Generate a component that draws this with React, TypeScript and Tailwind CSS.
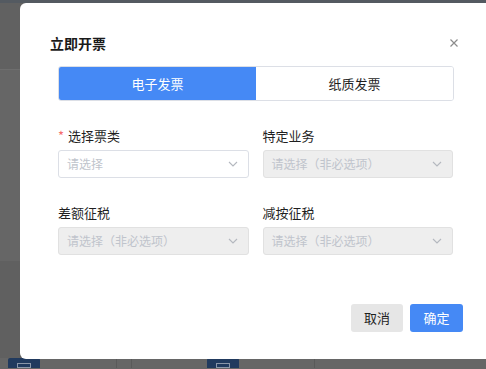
const font = { fontFamily: '"Noto Sans CJK SC", "Noto Sans", sans-serif' };

function Chevron() {
  return (
    <svg width="10" height="6" viewBox="0 0 10 6" className="shrink-0">
      <path d="M1 1l4 4 4-4" fill="none" stroke="#b4b8bf" strokeWidth="1.1" />
    </svg>
  );
}

function Select({ placeholder, disabled }: { placeholder: string; disabled?: boolean }) {
  return (
    <div
      className={
        'flex h-[28px] items-center justify-between rounded-[3px] border pl-[8px] pr-[10px] ' +
        (disabled ? 'border-[#e1e1e1] bg-[#eeeeee]' : 'border-[#dcdfe6] bg-white')
      }
    >
      <span className="text-[12px] leading-none text-[#c0c4cc]">{placeholder}</span>
      <Chevron />
    </div>
  );
}

function Field({ label, required, disabled }: { label: string; required?: boolean; disabled?: boolean }) {
  return (
    <div className="flex flex-col gap-[4px]">
      <div className="flex h-[20px] items-center text-[13px] text-[#1f1f1f]">
        {required && <span className="mr-[4px] text-[#f56c6c]">*</span>}
        {label}
      </div>
      <Select placeholder={disabled ? '请选择（非必选项）' : '请选择'} disabled={disabled} />
    </div>
  );
}

export default function App() {
  return (
    <div className="relative h-[369px] w-[486px] overflow-hidden bg-[#666666]" style={font}>
      {/* background page behind the overlay */}
      <div className="h-[3px] bg-[#545a61]" />
      <div className="h-[67px] border-b border-[#6e6e6e] bg-[#616161]" />
      <div className="h-[191px] bg-[#666666]" />
      <div className="h-[97px] bg-[#606060]" />
      <div className="flex h-[10px] items-start">
        <div className="ml-[8px] h-[10px] w-[32px] rounded-t-[2px] bg-[#213a5e] pt-[5px] pl-[9px]">
          <div className="h-[5px] w-[14px] border border-[#8a96a8]" />
        </div>
        <div className="ml-[76px] h-[10px] w-px bg-[#5a5a5a]" />
        <div className="ml-[14px] h-[10px] w-px bg-[#5a5a5a]" />
        <div className="ml-[75px] h-[10px] w-[32px] rounded-t-[2px] bg-[#213a5e] pt-[5px] pl-[9px]">
          <div className="h-[5px] w-[14px] border border-[#8a96a8]" />
        </div>
        <div className="ml-[75px] h-[10px] w-px bg-[#5a5a5a]" />
      </div>

      {/* dialog */}
      <div className="absolute left-[20px] top-[3px] flex h-[356px] w-[480px] flex-col rounded-l-[6px] bg-white">
        <div className="flex items-center justify-between pl-[30px] pr-[42px] pt-[30px]">
          <h2 className="text-[14px] font-bold leading-[20px] text-[#1a1a1a]">立即开票</h2>
          <svg width="8" height="8" viewBox="0 0 8 8">
            <path d="M0.5 0.5l7 7M7.5 0.5l-7 7" stroke="#8c8c8c" strokeWidth="1.2" />
          </svg>
        </div>

        <div className="ml-[38px] w-[396px]">
          <div className="mt-[13px] flex h-[35px] overflow-hidden rounded-[3px] border border-[#dcdfe6] text-[13px]">
            <div className="flex flex-1 items-center justify-center bg-[#4589f5] text-white">电子发票</div>
            <div className="flex flex-1 items-center justify-center bg-white text-[#1f1f1f]">纸质发票</div>
          </div>

          <div className="mt-[25px] grid grid-cols-2 gap-x-[14px] gap-y-[25px] pr-px">
            <Field label="选择票类" required />
            <Field label="特定业务" disabled />
            <Field label="差额征税" disabled />
            <Field label="减按征税" disabled />
          </div>
        </div>

        <div className="mt-[49px] flex justify-end gap-[7px] pr-[37px]">
          <button className="h-[28px] w-[52px] rounded-[3px] bg-[#e6e6e6] text-[13px] text-[#1f1f1f]">取消</button>
          <button className="h-[28px] w-[53px] rounded-[3px] bg-[#4589f5] text-[13px] text-white">确定</button>
        </div>
      </div>
    </div>
  );
}
